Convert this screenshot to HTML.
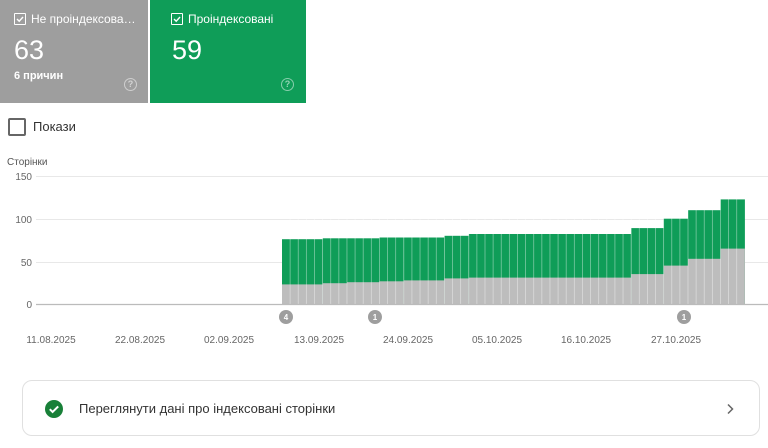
<!DOCTYPE html>
<html><head><meta charset="utf-8"><style>
body{margin:0;width:768px;height:448px;background:#fff;font-family:"Liberation Sans",sans-serif;position:relative;overflow:hidden}
.card{position:absolute;top:0;height:103px;color:#fff}
.cb{position:absolute;left:14px;top:13px;width:10px;height:10px;border:1px solid #fff;border-radius:1px}
.cb svg{position:absolute;left:0;top:0}
.lbl{position:absolute;left:31px;top:12px;font-size:12px}
.num{position:absolute;left:14px;top:35px;font-size:27px}
.q{position:absolute;top:78px;width:11px;height:11px;border:1.6px solid rgba(255,255,255,.5);border-radius:50%;font-size:9px;line-height:11px;text-align:center;color:rgba(255,255,255,.55);font-weight:bold}
</style></head><body>
<div class="card" style="left:0;width:148px;background:#9e9e9e">
 <div class="cb"><svg width="10" height="10"><path d="M2 5l2.2 2.2L8 3" stroke="#fff" stroke-width="1.4" fill="none"/></svg></div>
 <div class="lbl">Не проіндексова…</div>
 <div class="num">63</div>
 <div style="position:absolute;left:14px;top:70px;font-size:11px;font-weight:600">6 причин</div>
 <div class="q" style="left:124px">?</div>
</div>
<div class="card" style="left:150px;width:156px;background:#0f9d58">
 <div class="cb" style="left:21px"><svg width="10" height="10"><path d="M2 5l2.2 2.2L8 3" stroke="#fff" stroke-width="1.4" fill="none"/></svg></div>
 <div class="lbl" style="left:38px">Проіндексовані</div>
 <div class="num" style="left:22px">59</div>
 <div class="q" style="left:131px">?</div>
</div>
<div style="position:absolute;left:8px;top:118px;width:14px;height:14px;border:2px solid #666;border-radius:2px"></div>
<div style="position:absolute;left:33px;top:119px;font-size:13px;color:#333">Покази</div>
<svg style="position:absolute;left:0;top:150px" width="768" height="200" viewBox="0 150 768 200" font-family="Liberation Sans, sans-serif">
 <text x="7" y="165" font-size="10" fill="#555">Сторінки</text>
 <g stroke="#e8e8e8" stroke-width="1"><line x1="36" y1="176.5" x2="768" y2="176.5"/><line x1="36" y1="219.5" x2="768" y2="219.5"/><line x1="36" y1="262.5" x2="768" y2="262.5"/></g>
 <g font-size="10" fill="#666" text-anchor="end"><text x="32" y="180">150</text><text x="32" y="223">100</text><text x="32" y="266">50</text><text x="32" y="308">0</text></g>
 <g fill="#0f9d58">
  <rect x="282" y="239.2" width="40.6" height="65"/><rect x="322.6" y="238.3" width="24.4" height="66"/><rect x="347" y="238.3" width="32.5" height="66"/><rect x="379.4" y="237.5" width="24.4" height="67"/><rect x="403.8" y="237.5" width="40.6" height="67"/><rect x="444.4" y="235.8" width="24.4" height="69"/><rect x="468.8" y="234" width="162.4" height="70"/><rect x="631.2" y="228.1" width="32.5" height="76"/><rect x="663.6" y="218.7" width="24.4" height="86"/><rect x="688" y="210.2" width="32.5" height="94"/><rect x="720.5" y="199.4" width="24.4" height="105"/>
 </g>
 <g fill="#bdbdbd">
  <rect x="282" y="284.4" width="40.6" height="20"/><rect x="322.6" y="283.2" width="24.4" height="21"/><rect x="347" y="282.2" width="32.5" height="22"/><rect x="379.4" y="281.3" width="24.4" height="23"/><rect x="403.8" y="280.4" width="40.6" height="24"/><rect x="444.4" y="278.4" width="24.4" height="26"/><rect x="468.8" y="277.6" width="162.4" height="27"/><rect x="631.2" y="274.1" width="32.5" height="30"/><rect x="663.6" y="265.6" width="24.4" height="39"/><rect x="688" y="258.8" width="32.5" height="46"/><rect x="720.5" y="248.6" width="24.4" height="56"/>
 </g>
 <g stroke="#fff" stroke-opacity="0.45" stroke-width="0.8" id="sep"></g>
 <line x1="36" y1="304.5" x2="768" y2="304.5" stroke="#bbb" stroke-width="1.2"/>
 <g font-size="8" font-weight="bold" fill="#fff" text-anchor="middle">
  <circle cx="286" cy="317" r="7" fill="#9e9e9e"/><text x="286" y="320">4</text>
  <circle cx="375" cy="317" r="7" fill="#9e9e9e"/><text x="375" y="320">1</text>
  <circle cx="684" cy="317" r="7" fill="#9e9e9e"/><text x="684" y="320">1</text>
 </g>
 <g font-size="10" fill="#666" text-anchor="middle">
  <text x="51" y="343">11.08.2025</text><text x="140" y="343">22.08.2025</text><text x="229" y="343">02.09.2025</text><text x="319" y="343">13.09.2025</text><text x="408" y="343">24.09.2025</text><text x="497" y="343">05.10.2025</text><text x="586" y="343">16.10.2025</text><text x="676" y="343">27.10.2025</text>
 </g>
</svg>
<script>
var g=document.getElementById('sep'),s='';
for(var i=1;i<57;i++){var x=282+8.12*i;s+='<line x1="'+x+'" y1="195" x2="'+x+'" y2="304"/>';}
g.innerHTML=s;
</script>
<div style="position:absolute;left:22px;top:380px;width:738px;height:56px;border:1px solid #e0e0e0;border-radius:10px;box-sizing:border-box">
 <svg style="position:absolute;left:22px;top:19px" width="18" height="18"><circle cx="9" cy="9" r="9" fill="#188038"/><path d="M4.8 9.2l2.8 2.8 5.6-5.6" stroke="#fff" stroke-width="2" fill="none"/></svg>
 <div style="position:absolute;left:56px;top:20px;font-size:13px;color:#333">Переглянути дані про індексовані сторінки</div>
 <svg style="position:absolute;left:702px;top:22px" width="10" height="12"><path d="M3 1.5l4.5 4.5L3 10.5" stroke="#666" stroke-width="1.5" fill="none"/></svg>
</div>
</body></html>
